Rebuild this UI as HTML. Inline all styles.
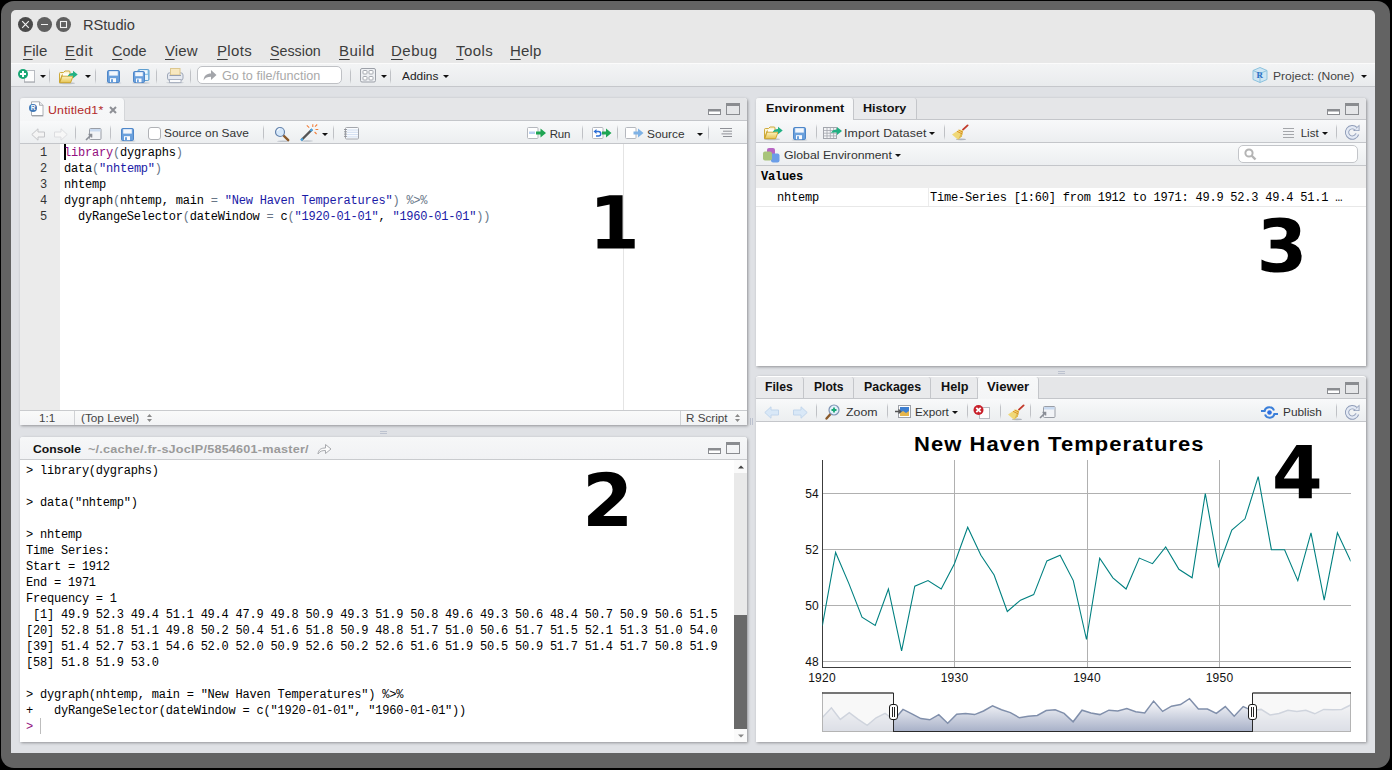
<!DOCTYPE html>
<html>
<head>
<meta charset="utf-8">
<title>RStudio</title>
<style>
*{box-sizing:border-box;margin:0;padding:0}
html,body{width:1392px;height:770px;overflow:hidden;background:#000;font-family:"Liberation Sans",sans-serif;}
body{position:relative}
.a{position:absolute}
#frame{position:absolute;left:1px;top:1px;width:1389px;height:767px;background:#636363;border-radius:13px;}
#win{position:absolute;left:11px;top:10px;width:1364px;height:743px;background:#e8e8e8;border-radius:5px 5px 0 0;overflow:hidden}
#pg{position:absolute;left:-11px;top:-10px;width:1392px;height:770px}
#titletext{position:absolute;left:83px;top:16px;font-size:14px;color:#3a3a3a;line-height:18px}
.wbtn{position:absolute;top:17px;width:15px;height:15px;border-radius:50%;background:#5c5c5c}
.menu{position:absolute;top:42px;font-size:14px;color:#3c3c3c;line-height:18px}
.menu u{text-decoration:none;border-bottom:1px solid #3c3c3c}
#toolbar{position:absolute;left:11px;top:63px;width:1364px;height:24px;background:linear-gradient(#f3f4f5,#e9ebed);border-top:1px solid #fbfbfb;border-bottom:1px solid #c5c7cb}
#main{position:absolute;left:11px;top:87px;width:1364px;height:666px;background:#dfe1e5}
.pane{position:absolute;background:#fff;box-shadow:1px 1px 3px rgba(0,0,0,.35);border-radius:3px 3px 0 0}
.tabbar{position:absolute;background:#e5e6e8;border-bottom:1px solid #c4c6ca;border-radius:3px 3px 0 0}
.ptool{position:absolute;background:linear-gradient(#f8f9fa,#eceef0);border-bottom:1px solid #c4c6ca}
.mono{position:absolute;font-family:"Liberation Mono",monospace;font-size:12px;letter-spacing:-0.216px;white-space:pre;line-height:16px;color:#000}
.ui{position:absolute;font-size:12px;color:#2a2a2a;line-height:14px;white-space:nowrap}
.b{font-weight:bold}
.p{color:#687687}.s{color:#1a1aa6}.o{color:#687687}
.vtab{top:377px;height:21px;background:#e9eaec;border-right:1px solid #c4c6ca;border-radius:3px 3px 0 0}
.sep{position:absolute;width:1px;height:16px;margin-top:-1px;background:linear-gradient(rgba(190,192,196,0),#bfc1c5 25%,#bfc1c5 75%,rgba(190,192,196,0))}
.dd{position:absolute;width:0;height:0;border-left:3px solid transparent;border-right:3px solid transparent;border-top:3px solid #111}
svg{position:absolute;overflow:visible}
</style>
</head>
<body>
<div id="frame"></div>
<div id="win"><div id="pg">
  <div class="wbtn" style="left:18px;background:#4a4a4a"></div>
  <div class="wbtn" style="left:37px;background:#5f5f5f"></div>
  <div class="wbtn" style="left:56px;background:#5f5f5f"></div>
  <svg style="left:18px;top:17px" width="53" height="15" viewBox="0 0 53 15">
    <path d="M4.200 4.200l6.600 6.600M10.800 4.200l-6.600 6.600" stroke="#f0f0f0" stroke-width="1.200"/>
    <path d="M23 7.500h7" stroke="#f0f0f0" stroke-width="1.200"/>
    <rect x="42.500" y="4.500" width="6" height="6" fill="none" stroke="#f0f0f0" stroke-width="1.100"/>
  </svg>
  <div id="titletext" style="left:83.0px;top:16px;letter-spacing:-0.00px;transform:scaleX(1.044);transform-origin:0 0">RStudio</div>
  <span class="menu" style="left:22.6px;;letter-spacing:0.06px;transform:scaleX(1.070);transform-origin:0 0"><u>F</u>ile</span>
  <span class="menu" style="left:65.2px;;letter-spacing:0.54px;transform:scaleX(1.070);transform-origin:0 0"><u>E</u>dit</span>
  <span class="menu" style="left:111.6px;;letter-spacing:0.00px;transform:scaleX(1.027);transform-origin:0 0"><u>C</u>ode</span>
  <span class="menu" style="left:165.1px;;letter-spacing:0.08px;transform:scaleX(1.070);transform-origin:0 0"><u>V</u>iew</span>
  <span class="menu" style="left:216.5px;;letter-spacing:0.34px;transform:scaleX(1.070);transform-origin:0 0"><u>P</u>lots</span>
  <span class="menu" style="left:270.3px;;letter-spacing:0.00px;transform:scaleX(1.020);transform-origin:0 0"><u>S</u>ession</span>
  <span class="menu" style="left:338.6px;;letter-spacing:0.47px;transform:scaleX(1.070);transform-origin:0 0"><u>B</u>uild</span>
  <span class="menu" style="left:391.4px;;letter-spacing:0.46px;transform:scaleX(1.070);transform-origin:0 0"><u>D</u>ebug</span>
  <span class="menu" style="left:456.1px;;letter-spacing:0.40px;transform:scaleX(1.070);transform-origin:0 0"><u>T</u>ools</span>
  <span class="menu" style="left:510.4px;;letter-spacing:0.13px;transform:scaleX(1.070);transform-origin:0 0"><u>H</u>elp</span>
  <div id="toolbar"></div>
  <!-- new file -->
  <svg style="left:17px;top:68px" width="20" height="16" viewBox="0 0 20 16">
    <rect x="7.5" y="2.5" width="10" height="11.5" fill="#fdfdfd" stroke="#b9bcc2"/>
    <rect x="7" y="13.5" width="11" height="1.2" fill="#9a9da3" opacity=".6"/>
    <circle cx="6" cy="6" r="5" fill="#18a774"/>
    <path d="M3 6h6M6 3v6" stroke="#fff" stroke-width="2"/>
  </svg>
  <div class="dd" style="left:40px;top:75px"></div>
  <div class="sep" style="left:49px;top:69px"></div>
  <!-- open -->
  <svg style="left:58px;top:69px" width="20" height="16" viewBox="0 0 20 16">
    <defs><linearGradient id="fg1" x1="0" y1="0" x2="0" y2="1"><stop offset="0" stop-color="#fdf3bf"/><stop offset="1" stop-color="#e6c352"/></linearGradient></defs>
    <ellipse cx="9" cy="14.300" rx="8" ry="1" fill="#7d8796" opacity=".4"/>
    <path d="M1.500 13.500V4.500q0-1 1-1h3l1.500-1.500h4q1 0 1 1v3h-8z" fill="#fbf3d3" stroke="#c9a227" stroke-width=".9"/>
    <path d="M5 4.500h6v3H5z" fill="#fff"/>
    <path d="M1.800 13.700l2.200-6.500h11l-2.400 6.500z" fill="url(#fg1)" stroke="#c9a227" stroke-width=".9"/>
    <path d="M9.500 7.500c1-2.500 3-3.500 5.500-3.500V1.800l4.700 3.700-4.700 3.700V6.800c-2.500 0-4 0-5.500.7z" fill="#21b184"/>
  </svg>
  <div class="dd" style="left:85px;top:75px"></div>
  <div class="sep" style="left:95px;top:69px"></div>
  <!-- save -->
  <svg style="left:107px;top:70px" width="14" height="13" viewBox="0 0 14 13">
    <ellipse cx="6.500" cy="13" rx="8" ry=".8" fill="#7d8796" opacity=".4"/>
    <rect x=".5" y=".5" width="12" height="12" rx="1.200" fill="#6aa0dc" stroke="#4e86c8"/>
    <rect x="2.200" y="1.200" width="8.600" height="4.400" fill="#f3f7fc"/>
    <rect x="3" y="8.200" width="6" height="4" fill="#fbfcfe"/>
    <rect x="4" y="9.200" width="2" height="3" fill="#6aa0dc"/>
  </svg>
  <!-- save all -->
  <svg style="left:133px;top:69px" width="17" height="15" viewBox="0 0 17 15">
    <ellipse cx="8" cy="14" rx="9" ry=".8" fill="#7d8796" opacity=".4"/>
    <rect x="5" y=".5" width="11" height="11" rx="1.200" fill="#8fc7ea" stroke="#5f9fd0"/>
    <rect x="7" y="1.200" width="7.500" height="3.500" fill="#f3f9fd"/>
    <rect x="12" y="6" width="3" height="5" fill="#e6f3fb"/>
    <rect x=".5" y="2.500" width="11" height="11" rx="1.200" fill="#6aa0dc" stroke="#4e86c8"/>
    <rect x="2.200" y="3.200" width="7.600" height="4" fill="#f3f7fc"/>
    <rect x="3" y="9.500" width="5.500" height="3.800" fill="#fbfcfe"/>
    <rect x="4" y="10.400" width="1.800" height="2.900" fill="#6aa0dc"/>
  </svg>
  <div class="sep" style="left:156px;top:69px"></div>
  <!-- print -->
  <svg style="left:166px;top:68px" width="18" height="16" viewBox="0 0 18 16">
    <ellipse cx="9" cy="14.800" rx="9" ry=".8" fill="#7d8796" opacity=".35"/>
    <rect x="1.500" y="4.800" width="15.500" height="7.500" rx="2.200" fill="#e6eaf1" stroke="#9ea7b8"/>
    <rect x="4.500" y=".5" width="9.500" height="6.500" fill="#f7e8c0" stroke="#dcc78f"/>
    <path d="M3.500 7.500h11.500" stroke="#8f99ad" stroke-width=".9"/>
    <rect x="3.500" y="11.500" width="11.500" height="3" fill="#fafbfc" stroke="#a6aebd" stroke-width=".9"/>
  </svg>
  <div class="sep" style="left:190px;top:69px"></div>
  <!-- goto box -->
  <div class="a" style="left:197px;top:66px;width:145px;height:18px;border:1px solid #bfc1c5;border-radius:5px;background:#fff"></div>
  <svg style="left:203px;top:69px" width="14" height="12" viewBox="0 0 14 12">
    <path d="M.5 11.500C1 6.500 3.500 4.500 8 4.500V1l5.500 5L8 11V7.800C4.500 7.800 2.500 8.500.5 11.500z" fill="#a3a5aa"/>
  </svg>
  <div class="ui" style="left:222.2px;top:69px;color:#a9a9a9;font-size:12.5px;width:98px;overflow:hidden;letter-spacing:0.00px;transform:scaleX(1.010);transform-origin:0 0">Go to file/function</div>
  <div class="sep" style="left:350px;top:69px"></div>
  <!-- grid -->
  <svg style="left:360px;top:68px" width="16" height="15" viewBox="0 0 16 15">
    <rect x=".5" y=".5" width="15" height="13.500" rx="1.500" fill="#eef0f3" stroke="#9ca0a8"/>
    <rect x="3" y="2.500" width="4" height="3.500" rx=".8" fill="#fff" stroke="#9ca0a8" stroke-width=".9"/>
    <rect x="9" y="2.500" width="4" height="3.500" rx=".8" fill="#fff" stroke="#9ca0a8" stroke-width=".9"/>
    <rect x="3" y="8.500" width="4" height="3.500" rx=".8" fill="#fff" stroke="#9ca0a8" stroke-width=".9"/>
    <rect x="9" y="8.500" width="4" height="3.500" rx=".8" fill="#fff" stroke="#9ca0a8" stroke-width=".9"/>
  </svg>
  <div class="dd" style="left:381px;top:75px"></div>
  <div class="sep" style="left:390px;top:69px"></div>
  <div class="ui" style="left:402.3px;top:69px;font-size:11.5px;color:#222;letter-spacing:0.00px;transform:scaleX(1.036);transform-origin:0 0">Addins</div>
  <div class="dd" style="left:443px;top:75px"></div>
  <!-- project -->
  <svg style="left:1252px;top:67px" width="16" height="16" viewBox="0 0 16 16">
    <path d="M8 .5l7 3v9l-7 3-7-3v-9z" fill="#cfe6f3" stroke="#8dc3de"/>
    <path d="M1 3.500l7 3 7-3M8 6.500v9" stroke="#8dc3de" fill="none"/>
    <text x="4.500" y="10.500" font-family="Liberation Serif" font-weight="bold" font-size="9" fill="#2d6fc4">R</text>
  </svg>
  <div class="ui" style="left:1272.5px;top:69px;font-size:11.5px;color:#444;letter-spacing:0.00px;transform:scaleX(1.052);transform-origin:0 0">Project: (None)</div>
  <div class="dd" style="left:1361px;top:75px"></div>
  <div id="main"></div>
  <svg style="left:380px;top:431px" width="7" height="3" viewBox="0 0 7 3"><path d="M0 .5h7M0 2.500h7" stroke="#bcc2cf"/></svg>
  <svg style="left:1058px;top:371px" width="7" height="3" viewBox="0 0 7 3"><path d="M0 .5h7M0 2.500h7" stroke="#bcc2cf"/></svg>
  <svg style="left:750px;top:418px" width="3" height="7" viewBox="0 0 3 7"><path d="M.5 0v7M2.500 0v7" stroke="#bcc2cf"/></svg>
  <!-- SOURCE PANE -->
  <div class="pane" id="src" style="left:20px;top:98px;width:727px;height:327px"></div>
  <div class="tabbar" style="left:20px;top:98px;width:727px;height:23px"></div>
  <!-- active tab -->
  <div class="a" style="left:20px;top:98px;width:105px;height:23px;background:linear-gradient(#f7f8f9,#f5f6f7);border-radius:4px 4px 0 0;border-right:1px solid #d4d6d9"></div>
  <svg style="left:29px;top:101px" width="16" height="16" viewBox="0 0 16 16">
    <path d="M2.500 .8h8l3.500 3.500v10.200h-11.500z" fill="#fff" stroke="#a3a6ac" stroke-width=".9"/>
    <path d="M10.500 .8v3.500h3.500" fill="#e8e9ec" stroke="#a3a6ac" stroke-width=".9"/>
    <path d="M3 15h11.300" stroke="#85888e" stroke-width=".9" opacity=".7"/>
    <circle cx="4" cy="7" r="4" fill="#4179b8"/>
    <text x="1.700" y="9.400" font-size="6.500" font-weight="bold" fill="#fff" font-family="Liberation Sans">R</text>
  </svg>
  <div class="ui" style="left:48.3px;top:103px;font-size:11.5px;color:#b32a2a;letter-spacing:0.19px;transform:scaleX(1.070);transform-origin:0 0">Untitled1*</div>
  <svg style="left:109px;top:106px" width="8" height="8" viewBox="0 0 8 8"><path d="M1 1l6 6M7 1l-6 6" stroke="#8e9096" stroke-width="2"/></svg>
  <!-- min/max -->
  <svg style="left:708px;top:103px" width="33" height="13" viewBox="0 0 33 13">
    <rect x=".5" y="6.500" width="12" height="5" fill="#fff" stroke="#8a8c90"/><rect x="0" y="6" width="13" height="2.500" fill="#8a8c90"/>
    <rect x="18.500" y=".5" width="13" height="11" fill="none" stroke="#8a8c90"/><rect x="18" y="0" width="14" height="3" fill="#8a8c90"/>
  </svg>
  <div class="ptool" style="left:20px;top:121px;width:727px;height:23px"></div>
  <!-- back/forward -->
  <svg style="left:31px;top:128px" width="37" height="13" viewBox="0 0 37 13">
    <path d="M.8 6.500L7 .8V4h6.500v5H7v3.200z" fill="#f4f4f4" stroke="#c3c4c7"/>
    <path d="M36.200 6.500L30 .8V4h-6.500v5H30v3.200z" fill="#f7f7f7" stroke="#dcdde0"/>
  </svg>
  <div class="sep" style="left:75px;top:126px"></div>
  <!-- show in new window -->
  <svg style="left:85px;top:128px" width="17" height="13" viewBox="0 0 17 13">
    <rect x="4.500" y=".5" width="11.500" height="11" rx="1" fill="#f2f4f7" stroke="#9a9ea6"/>
    <rect x="5" y="1" width="10.500" height="2.500" fill="#c9daf0"/>
    <path d="M1 12l5-5M3.500 6.500h3v3" stroke="#8a8e96" stroke-width="1.600" fill="none"/>
  </svg>
  <div class="sep" style="left:110px;top:126px"></div>
  <svg style="left:121px;top:128px" width="14" height="13" viewBox="0 0 14 13">
    <ellipse cx="6.500" cy="13" rx="8" ry=".8" fill="#7d8796" opacity=".4"/>
    <rect x=".5" y=".5" width="12" height="12" rx="1.200" fill="#6aa0dc" stroke="#4e86c8"/>
    <rect x="2.200" y="1.200" width="8.600" height="4.400" fill="#f3f7fc"/>
    <rect x="3" y="8.200" width="6" height="4" fill="#fbfcfe"/>
    <rect x="4" y="9.200" width="2" height="3" fill="#6aa0dc"/>
  </svg>
  <div class="a" style="left:148px;top:127px;width:13px;height:13px;border:1px solid #b0b2b6;border-radius:3px;background:#fff"></div>
  <div class="ui" style="left:164.3px;top:126px;font-size:11.5px;color:#333;letter-spacing:0.00px;transform:scaleX(1.036);transform-origin:0 0">Source on Save</div>
  <div class="sep" style="left:263px;top:126px"></div>
  <!-- magnifier -->
  <svg style="left:274px;top:126px" width="17" height="16" viewBox="0 0 17 16">
    <ellipse cx="9" cy="15.300" rx="6" ry=".8" fill="#7d8796" opacity=".4"/>
    <path d="M9 9l5.200 5.200" stroke="#8a5a2b" stroke-width="2.400" stroke-linecap="round"/>
    <circle cx="6" cy="6" r="4.500" fill="#d6e8fa" stroke="#6684ad" stroke-width="1.200"/>
    <path d="M3.500 5a2.800 2.800 0 0 1 2.500-2.300" stroke="#fff" stroke-width="1" fill="none"/>
  </svg>
  <!-- wand -->
  <svg style="left:300px;top:124px" width="20" height="18" viewBox="0 0 20 18">
    <path d="M1.500 16L12 5.500" stroke="#555" stroke-width="2.400"/>
    <path d="M1 16.500l1.800-1.800M10.500 7l1.800-1.800" stroke="#4aa3df" stroke-width="2.400"/>
    <path d="M12.800 .3v2.700M15 2.700l2.200-2.200M15.500 5.500h2.800M14.600 8l2 2M6.800 1.300l2.400 2.400" stroke="#f2803c" stroke-width="1.100"/>
    <ellipse cx="7" cy="17" rx="6" ry=".8" fill="#7d8796" opacity=".4"/>
  </svg>
  <div class="dd" style="left:322px;top:133px"></div>
  <div class="sep" style="left:333px;top:126px"></div>
  <!-- notebook -->
  <svg style="left:344px;top:127px" width="16" height="13" viewBox="0 0 16 13">
    <rect x="1.500" y=".5" width="13" height="11.500" rx="1" fill="#fbfcfe" stroke="#a4a7ad"/>
    <path d="M3 3h11M3 5.300h11M3 7.600h11M3 9.900h11" stroke="#c5d6ee" stroke-width=".8"/>
    <path d="M0 2.500h3M0 4.800h3M0 7.100h3M0 9.400h3" stroke="#8c8f95" stroke-width=".9"/>
  </svg>
  <!-- run -->
  <svg style="left:527px;top:127px" width="20" height="13" viewBox="0 0 20 13">
    <rect x=".5" y=".5" width="10.500" height="11" rx="1" fill="#fff" stroke="#b5b8be"/>
    <rect x="2" y="4.500" width="6" height="2.500" fill="#b9d0f0"/>
    <path d="M9 4.500h4.500V1.500l5.500 4.500-5.500 4.500v-3H9z" fill="#1fa553"/>
  </svg>
  <div class="ui" style="left:549.8px;top:127px;font-size:11.5px;color:#333;letter-spacing:-0.25px">Run</div>
  <div class="sep" style="left:582px;top:126px"></div>
  <!-- rerun -->
  <svg style="left:592px;top:127px" width="20" height="13" viewBox="0 0 20 13">
    <rect x=".5" y=".5" width="10.500" height="11" rx="1" fill="#fff" stroke="#b5b8be"/>
    <path d="M3 4.500h3.500a2 2 0 0 1 0 4.500H4" stroke="#2c6fd6" stroke-width="1.500" fill="none"/><path d="M1.500 4.500L4.500 2v5z" fill="#2c6fd6"/>
    <path d="M10 4.500h4V1.500l5.500 4.500-5.500 4.500v-3h-4z" fill="#1fa553"/>
  </svg>
  <div class="sep" style="left:617px;top:126px"></div>
  <!-- source -->
  <svg style="left:625px;top:127px" width="20" height="13" viewBox="0 0 20 13">
    <rect x=".5" y=".5" width="10.500" height="11" rx="1" fill="#fff" stroke="#b5b8be"/>
    <path d="M8.500 4.500h4.500V1.500l5.500 4.500-5.500 4.500v-3H8.500z" fill="#7fb2e5"/>
  </svg>
  <div class="ui" style="left:647.3px;top:127px;font-size:11.5px;color:#333;letter-spacing:0.00px;transform:scaleX(1.032);transform-origin:0 0">Source</div>
  <div class="dd" style="left:697px;top:133px"></div>
  <div class="sep" style="left:708px;top:126px"></div>
  <svg style="left:720px;top:128px" width="13" height="9" viewBox="0 0 13 9"><path d="M0 .5h12M3 3.200h9M1.500 5.900h10.500M3 8.500h9" stroke="#8e9096" stroke-width="1"/></svg>
  <!-- editor -->
  <div class="a" style="left:20px;top:144px;width:40px;height:266px;background:#ebebeb"></div>
  <div class="a" style="left:623px;top:144px;width:1px;height:266px;background:#e4e4e4"></div>
  <div class="mono" style="left:20px;top:145px;width:27px;text-align:right;color:#333">1
2
3
4
5</div>
  <div class="a" style="left:64px;top:144px;width:2px;height:16px;background:#000"></div>
  <div class="mono" id="code" style="left:64px;top:145px"><span style="color:#930f80">library</span><span class="p">(</span>dygraphs<span class="p">)</span>
data<span class="p">(</span><span class="s">"nhtemp"</span><span class="p">)</span>
nhtemp
dygraph<span class="p">(</span>nhtemp, main <span class="o">=</span> <span class="s">"New Haven Temperatures"</span><span class="p">)</span> <span class="o">%&gt;%</span>
  dyRangeSelector<span class="p">(</span>dateWindow <span class="o">=</span> c<span class="p">(</span><span class="s">"1920-01-01"</span>, <span class="s">"1960-01-01"</span><span class="p">))</span></div>
  <!-- status bar -->
  <div class="a" style="left:20px;top:410px;width:727px;height:15px;background:linear-gradient(#f9fafa,#f2f3f5);border-top:1px solid #c9cbce"></div>
  <div class="ui" style="left:39.4px;top:411px;font-size:11.500px;color:#444;letter-spacing:-0.00px;transform:scaleX(1.013);transform-origin:0 0">1:1</div>
  <div class="a" style="left:74px;top:411px;width:1px;height:14px;background:#d0d2d5"></div>
  <div class="ui" style="left:81.4px;top:411px;font-size:11.500px;color:#444;letter-spacing:0.00px;transform:scaleX(1.022);transform-origin:0 0">(Top Level)</div>
  <svg style="left:147px;top:414px" width="5" height="8" viewBox="0 0 5 8"><path d="M0 3L2.500 0 5 3zM0 5l2.500 3L5 5z" fill="#8a8a8a"/></svg>
  <div class="a" style="left:680px;top:411px;width:1px;height:14px;background:#d0d2d5"></div>
  <div class="ui" style="left:686.4px;top:411px;font-size:11.500px;color:#444;letter-spacing:0.00px;transform:scaleX(1.014);transform-origin:0 0">R Script</div>
  <svg style="left:735px;top:414px" width="5" height="8" viewBox="0 0 5 8"><path d="M0 3L2.500 0 5 3zM0 5l2.500 3L5 5z" fill="#8a8a8a"/></svg>
  <!-- CONSOLE PANE -->
  <div class="pane" id="con" style="left:20px;top:437px;width:727px;height:305px"></div>
  <div class="a" style="left:20px;top:437px;width:727px;height:23px;background:linear-gradient(#f6f7f8,#f1f2f4);border-bottom:1px solid #c9cbce;border-radius:3px 3px 0 0"></div>
  <div class="ui b" style="left:32.6px;top:442px;font-size:11.5px;color:#111;letter-spacing:0.00px;transform:scaleX(1.058);transform-origin:0 0" id="contitle">Console</div>
  <div class="ui b" style="left:87.8px;top:442px;font-size:11.5px;color:#9a9a9a;letter-spacing:0.19px;transform:scaleX(1.100);transform-origin:0 0" id="conpath">~/.cache/.fr-sJocIP/5854601-master/</div>
  <svg style="left:317px;top:443px" width="15" height="12" viewBox="0 0 15 12"><path d="M1 11C1.500 6.500 4 5 8.500 5V1.500l5.500 4.500-5.500 4.500V7.500C5 7.500 3 8 1 11z" fill="#fbfbfb" stroke="#a8aaae" stroke-width="1"/></svg>
  <svg style="left:708px;top:442px" width="33" height="13" viewBox="0 0 33 13">
    <rect x=".5" y="6.500" width="12" height="5" fill="#fff" stroke="#8a8c90"/><rect x="0" y="6" width="13" height="2.500" fill="#8a8c90"/>
    <rect x="18.500" y=".5" width="13" height="11" fill="none" stroke="#8a8c90"/><rect x="18" y="0" width="14" height="3" fill="#8a8c90"/>
  </svg>
  <div class="mono" id="context" style="left:26px;top:463px">&gt; library(dygraphs)

&gt; data("nhtemp")

&gt; nhtemp
Time Series:
Start = 1912 
End = 1971 
Frequency = 1 
 [1] 49.9 52.3 49.4 51.1 49.4 47.9 49.8 50.9 49.3 51.9 50.8 49.6 49.3 50.6 48.4 50.7 50.9 50.6 51.5
[20] 52.8 51.8 51.1 49.8 50.2 50.4 51.6 51.8 50.9 48.8 51.7 51.0 50.6 51.7 51.5 52.1 51.3 51.0 54.0
[39] 51.4 52.7 53.1 54.6 52.0 52.0 50.9 52.6 50.2 52.6 51.6 51.9 50.5 50.9 51.7 51.4 51.7 50.8 51.9
[58] 51.8 51.9 53.0

&gt; dygraph(nhtemp, main = "New Haven Temperatures") %&gt;%
+   dyRangeSelector(dateWindow = c("1920-01-01", "1960-01-01"))
<span style="color:#930f80">&gt;</span> </div>
  <div class="a" style="left:40px;top:718px;width:1px;height:16px;background:#bdbdbd"></div>
  <!-- scrollbar -->
  <div class="a" style="left:734px;top:460px;width:13px;height:282px;background:#e9e9e9"></div>
  <div class="a" style="left:734px;top:460px;width:13px;height:13px;background:#fafafa"></div>
  <div class="a" style="left:734px;top:729px;width:13px;height:13px;background:#fafafa"></div>
  <div class="a" style="left:734px;top:615px;width:13px;height:114px;background:#696969"></div>
  <svg style="left:738px;top:465px" width="6" height="4" viewBox="0 0 6 4"><path d="M0 3.500L3 .5l3 3z" fill="#444"/></svg>
  <svg style="left:738px;top:734px" width="6" height="4" viewBox="0 0 6 4"><path d="M0 .5L3 3.500l3-3z" fill="#888"/></svg>
  <!-- ENV PANE -->
  <div class="pane" id="env" style="left:756px;top:98px;width:610px;height:268px"></div>
  <div class="tabbar" style="left:756px;top:98px;width:610px;height:22px"></div>
  <div class="a" style="left:756px;top:98px;width:98px;height:22px;background:linear-gradient(#f7f8f9,#f4f5f6);border-radius:3px 3px 0 0;border-right:1px solid #c4c6ca"></div>
  <div class="a" style="left:854px;top:98px;width:63px;height:21px;background:#e9eaec;border-right:1px solid #c4c6ca;border-radius:0 3px 0 0"></div>
  <div class="ui b" style="left:765.5px;top:101px;font-size:11.5px;color:#111;letter-spacing:0.09px;transform:scaleX(1.100);transform-origin:0 0" id="t_env">Environment</div>
  <div class="ui b" style="left:863.4px;top:101px;font-size:11.5px;color:#111;letter-spacing:0.00px;transform:scaleX(1.094);transform-origin:0 0" id="t_hist">History</div>
  <svg style="left:1327px;top:103px" width="33" height="13" viewBox="0 0 33 13">
    <rect x=".5" y="6.500" width="12" height="5" fill="#fff" stroke="#8a8c90"/><rect x="0" y="6" width="13" height="2.500" fill="#8a8c90"/>
    <rect x="18.500" y=".5" width="13" height="11" fill="none" stroke="#8a8c90"/><rect x="18" y="0" width="14" height="3" fill="#8a8c90"/>
  </svg>
  <div class="ptool" style="left:756px;top:120px;width:610px;height:23px"></div>
  <svg style="left:763px;top:125px" width="20" height="16" viewBox="0 0 20 16">
    <defs><linearGradient id="fg2" x1="0" y1="0" x2="0" y2="1"><stop offset="0" stop-color="#fdf3bf"/><stop offset="1" stop-color="#e6c352"/></linearGradient></defs>
    <ellipse cx="9" cy="14.300" rx="8" ry="1" fill="#7d8796" opacity=".4"/>
    <path d="M1.500 13.500V4.500q0-1 1-1h3l1.500-1.500h4q1 0 1 1v3h-8z" fill="#fbf3d3" stroke="#c9a227" stroke-width=".9"/>
    <path d="M5 4.500h6v3H5z" fill="#fff"/>
    <path d="M1.800 13.700l2.200-6.500h11l-2.400 6.500z" fill="url(#fg2)" stroke="#c9a227" stroke-width=".9"/>
    <path d="M9.500 7.500c1-2.500 3-3.500 5.500-3.500V1.800l4.700 3.700-4.700 3.700V6.800c-2.500 0-4 0-5.500.7z" fill="#21b184"/>
  </svg>
  <svg style="left:793px;top:127px" width="14" height="13" viewBox="0 0 14 13">
    <ellipse cx="6.500" cy="13" rx="8" ry=".8" fill="#7d8796" opacity=".4"/>
    <rect x=".5" y=".5" width="12" height="12" rx="1.200" fill="#6aa0dc" stroke="#4e86c8"/>
    <rect x="2.200" y="1.200" width="8.600" height="4.400" fill="#f3f7fc"/>
    <rect x="3" y="8.200" width="6" height="4" fill="#fbfcfe"/>
    <rect x="4" y="9.200" width="2" height="3" fill="#6aa0dc"/>
  </svg>
  <div class="sep" style="left:816px;top:125px"></div>
  <svg style="left:823px;top:126px" width="20" height="14" viewBox="0 0 20 14">
    <rect x=".5" y="1.500" width="13" height="11" fill="#f4f5f7" stroke="#a3a6ad"/>
    <path d="M.5 4.500h13M.5 7.200h13M.5 9.900h13M4 1.500v11M7.300 1.500v11M10.600 1.500v11" stroke="#a3a6ad" stroke-width=".8"/>
    <path d="M8 7c1-2.500 3-3.500 6-3.500V1l5 4-5 4V6.500c-3 0-4.500 0-6 .5z" fill="#22b082"/>
  </svg>
  <div class="ui" style="left:844.3px;top:126px;font-size:11.5px;color:#333;letter-spacing:0.12px;transform:scaleX(1.070);transform-origin:0 0" id="t_imp">Import Dataset</div>
  <div class="dd" style="left:929px;top:132px"></div>
  <div class="sep" style="left:944px;top:125px"></div>
  <svg style="left:952px;top:124px" width="17" height="16" viewBox="0 0 17 16" class="broom">
    <ellipse cx="9" cy="15.300" rx="5" ry=".9" fill="#7d8796" opacity=".55"/>
    <path d="M11 5.600L15.600 1.400" stroke="#c23a2a" stroke-width="1.900" stroke-linecap="round"/>
    <path d="M7.400 5.400L11 6.300 9.900 12.200 6 15.800 0 10.500z" fill="#f0d878"/>
    <path d="M6 15.800L9.900 12.200 11 6.300 9 9z" fill="#dcb951"/>
    <path d="M5 7.300L10.400 10M6.600 6L10.800 8.200" stroke="#d98a1e" stroke-width=".9"/>
  </svg>
  <svg style="left:1283px;top:128px" width="11" height="10" viewBox="0 0 11 10"><path d="M0 .5h11M0 3.500h11M0 6.500h11M0 9.500h11" stroke="#a4a6aa" stroke-width="1"/></svg>
  <div class="ui" style="left:1300.7px;top:126px;font-size:11.5px;color:#333;letter-spacing:-0.00px">List</div>
  <div class="dd" style="left:1322px;top:132px"></div>
  <div class="sep" style="left:1336px;top:125px"></div>
  <svg style="left:1344px;top:124px" width="16" height="15" viewBox="0 0 16 15" class="refresh">
    <path d="M12 4.800A5.200 5.200 0 1 0 13.200 10" fill="none" stroke="#8f9cb8" stroke-width="4.200"/>
    <path d="M9 7h6.500V.5z" fill="#8f9cb8"/>
    <path d="M12 4.800A5.200 5.200 0 1 0 13.200 10" fill="none" stroke="#e3e9f4" stroke-width="2.400"/>
    <path d="M10.800 6.200h3.900V2.300z" fill="#e3e9f4"/>
  </svg>
  <div class="ptool" style="left:756px;top:143px;width:610px;height:23px"></div>
  <svg style="left:763px;top:148px" width="17" height="15" viewBox="0 0 17 15">
    <rect x="4" y="0" width="8" height="8" rx="2" fill="#b866c4"/>
    <rect x="8" y="5.500" width="8.500" height="9" rx="2" fill="#6b9ee8"/>
    <rect x="0" y="3.500" width="9" height="9" rx="2" fill="#a8c47a"/>
  </svg>
  <div class="ui" style="left:784.3px;top:148px;font-size:11.5px;color:#333;letter-spacing:-0.00px;transform:scaleX(1.068);transform-origin:0 0" id="t_glob">Global Environment</div>
  <div class="dd" style="left:895px;top:154px"></div>
  <div class="a" style="left:1238px;top:145px;width:120px;height:18px;border:1px solid #c3c5c9;border-radius:5px;background:#fff"></div>
  <svg style="left:1244px;top:148px" width="13" height="12" viewBox="0 0 13 12"><circle cx="5" cy="5" r="3.600" fill="none" stroke="#b4b4b4" stroke-width="2"/><path d="M7.500 7.500l4 4" stroke="#b4b4b4" stroke-width="2.400"/></svg>
  <div class="a" style="left:756px;top:166px;width:610px;height:22px;background:#eeeeee"></div>
  <div class="mono b" style="left:761px;top:169px;font-weight:bold">Values</div>
  <div class="a" style="left:756px;top:206px;width:610px;height:1px;background:#e8e8e8"></div>
  <div class="a" style="left:928px;top:188px;width:1px;height:18px;background:#ececec"></div>
  <div class="mono" style="left:777px;top:190px">nhtemp</div>
  <div class="mono" style="left:930px;top:190px">Time-Series [1:60] from 1912 to 1971: 49.9 52.3 49.4 51.1 …</div>
  <!-- VIEWER PANE -->
  <div class="pane" id="vw" style="left:756px;top:376px;width:610px;height:366px"></div>
<!--VWS-->
  <div class="tabbar" style="left:756px;top:377px;width:610px;height:22px"></div>
  <div class="a vtab" style="left:756px;width:48px"></div>
  <div class="a vtab" style="left:804px;width:50px"></div>
  <div class="a vtab" style="left:854px;width:77px"></div>
  <div class="a vtab" style="left:931px;width:47px"></div>
  <div class="a" style="left:978px;top:377px;width:61px;height:22px;background:linear-gradient(#f7f8f9,#f4f5f6);border-radius:3px 3px 0 0;border-right:1px solid #c4c6ca"></div>
  <div class="ui b" style="left:765.3px;top:380px;font-size:12px;color:#111;letter-spacing:0.00px;transform:scaleX(1.015);transform-origin:0 0" id="t_files">Files</div>
  <div class="ui b" style="left:813.6px;top:380px;font-size:12px;color:#111;letter-spacing:-0.00px;transform:scaleX(1.008);transform-origin:0 0" id="t_plots">Plots</div>
  <div class="ui b" style="left:863.5px;top:380px;font-size:12px;color:#111;letter-spacing:0.00px;transform:scaleX(1.032);transform-origin:0 0" id="t_pack">Packages</div>
  <div class="ui b" style="left:940.5px;top:380px;font-size:12px;color:#111;letter-spacing:0.00px;transform:scaleX(1.056);transform-origin:0 0" id="t_help">Help</div>
  <div class="ui b" style="left:987.0px;top:380px;font-size:12px;color:#111;letter-spacing:0.00px;transform:scaleX(1.095);transform-origin:0 0" id="t_view">Viewer</div>
  <svg style="left:1327px;top:382px" width="33" height="13" viewBox="0 0 33 13">
    <rect x=".5" y="6.500" width="12" height="5" fill="#fff" stroke="#8a8c90"/><rect x="0" y="6" width="13" height="2.500" fill="#8a8c90"/>
    <rect x="18.500" y=".5" width="13" height="11" fill="none" stroke="#8a8c90"/><rect x="18" y="0" width="14" height="3" fill="#8a8c90"/>
  </svg>
  <div class="ptool" style="left:756px;top:399px;width:610px;height:23px"></div>
  <svg style="left:764px;top:406px" width="44" height="13" viewBox="0 0 44 13">
    <path d="M.8 6.500L7 .8V4h7.500v5H7v3.200z" fill="#d9e8f7" stroke="#c2d6ec"/>
    <path d="M43.200 6.500L37 .8V4h-7.500v5H37v3.200z" fill="#d9e8f7" stroke="#c2d6ec"/>
  </svg>
  <div class="sep" style="left:816px;top:404px"></div>
  <svg style="left:825px;top:404px" width="15" height="16" viewBox="0 0 15 16">
    <path d="M6 9.500L1.500 14.500" stroke="#8a5a2b" stroke-width="2.400" stroke-linecap="round"/>
    <circle cx="9" cy="6" r="5" fill="#e3f0fb" stroke="#7d93b3" stroke-width="1.200"/>
    <path d="M6.500 6h5M9 3.500v5" stroke="#18a774" stroke-width="1.800"/>
  </svg>
  <div class="ui" style="left:846.3px;top:405px;font-size:11.5px;color:#333;letter-spacing:0.05px;transform:scaleX(1.070);transform-origin:0 0" id="t_zoom">Zoom</div>
  <div class="sep" style="left:887px;top:404px"></div>
  <svg style="left:895px;top:405px" width="16" height="14" viewBox="0 0 16 14">
    <rect x="3.500" y=".5" width="12" height="12" fill="#fff" stroke="#9ea2a9"/>
    <rect x="5" y="2" width="9" height="9" fill="#3e7fd0"/>
    <path d="M5 8l3-2 3 2 3-2v5H5z" fill="#e6b64c"/>
    <path d="M0 6.500h5M3.500 4.500l2.200 2-2.200 2" stroke="#555" stroke-width="1.300" fill="none"/>
  </svg>
  <div class="ui" style="left:914.5px;top:405px;font-size:11.5px;color:#333;letter-spacing:0.00px;transform:scaleX(1.019);transform-origin:0 0" id="t_exp">Export</div>
  <div class="dd" style="left:952px;top:411px"></div>
  <div class="sep" style="left:967px;top:404px"></div>
  <svg style="left:973px;top:404px" width="18" height="16" viewBox="0 0 18 16">
    <rect x="6.500" y="3.500" width="10" height="11" fill="#fdfdfd" stroke="#b9bcc2"/>
    <circle cx="5.500" cy="6" r="5" fill="#c8202a"/>
    <path d="M3.300 3.800l4.400 4.400M7.700 3.800L3.300 8.200" stroke="#fff" stroke-width="1.800"/>
  </svg>
  <div class="sep" style="left:1000px;top:404px"></div>
  <svg style="left:1008px;top:404px" width="17" height="16" viewBox="0 0 17 16" class="broom">
    <ellipse cx="9" cy="15.300" rx="5" ry=".9" fill="#7d8796" opacity=".55"/>
    <path d="M11 5.600L15.600 1.400" stroke="#c23a2a" stroke-width="1.900" stroke-linecap="round"/>
    <path d="M7.400 5.400L11 6.300 9.900 12.200 6 15.800 0 10.500z" fill="#f0d878"/>
    <path d="M6 15.800L9.900 12.200 11 6.300 9 9z" fill="#dcb951"/>
    <path d="M5 7.300L10.400 10M6.600 6L10.800 8.200" stroke="#d98a1e" stroke-width=".9"/>
  </svg>
  <div class="sep" style="left:1030px;top:404px"></div>
  <svg style="left:1039px;top:406px" width="17" height="13" viewBox="0 0 17 13">
    <rect x="4.500" y=".5" width="11.500" height="11" rx="1" fill="#f2f4f7" stroke="#9a9ea6"/>
    <rect x="5" y="1" width="10.500" height="2.500" fill="#c9daf0"/>
    <path d="M1 12l5-5M3.500 6.500h3v3" stroke="#8a8e96" stroke-width="1.600" fill="none"/>
  </svg>
  <svg style="left:1261px;top:406px" width="17" height="13" viewBox="0 0 17 13">
    <path d="M3.500 5A5 5 0 0 1 13 4.500" fill="none" stroke="#3b7fd9" stroke-width="2"/>
    <path d="M13.500 8A5 5 0 0 1 4 8.500" fill="none" stroke="#3b7fd9" stroke-width="2"/>
    <path d="M0 5h4.500M12.500 8H17" stroke="#3b7fd9" stroke-width="2"/>
    <circle cx="8.500" cy="6.500" r="2.300" fill="#2d6fe0"/>
  </svg>
  <div class="ui" style="left:1282.6px;top:405px;font-size:11.5px;color:#333;letter-spacing:0.00px;transform:scaleX(1.029);transform-origin:0 0" id="t_pub">Publish</div>
  <div class="sep" style="left:1336px;top:404px"></div>
  <svg style="left:1344px;top:404px" width="16" height="15" viewBox="0 0 16 15" class="refresh">
    <path d="M12 4.800A5.200 5.200 0 1 0 13.200 10" fill="none" stroke="#8f9cb8" stroke-width="4.200"/>
    <path d="M9 7h6.500V.5z" fill="#8f9cb8"/>
    <path d="M12 4.800A5.200 5.200 0 1 0 13.200 10" fill="none" stroke="#e3e9f4" stroke-width="2.400"/>
    <path d="M10.800 6.200h3.900V2.300z" fill="#e3e9f4"/>
  </svg>
  <!-- chart -->
  <div class="a b" id="ctitle" style="left:913.6px;top:431px;font-size:20px;line-height:26px;color:#000;white-space:nowrap;letter-spacing:0.96px;transform:scaleX(1.100);transform-origin:0 0">New Haven Temperatures</div>
  <svg style="left:0;top:0" width="1392" height="770" viewBox="0 0 1392 770" id="chart">
    <defs><linearGradient id="rg" x1="0" y1="0" x2="0" y2="1"><stop offset="0" stop-color="#ffffff"/><stop offset="1" stop-color="#a6afc7"/></linearGradient>
    <clipPath id="cp"><rect x="822.4" y="455" width="528.2" height="215"/></clipPath></defs>
    <g stroke="#b0b0b0" stroke-width="1" shape-rendering="crispEdges">
      <path d="M822.4 493.500H1350.6M822.4 549.500H1350.6M822.4 605.500H1350.6M822.4 661.500H1350.6"/>
      <path d="M954.500 460V667M1087.500 460V667M1219.500 460V667"/>
    </g>
    <path d="M822.500 460V667.500H1350.6" fill="none" stroke="#3c3c3c" stroke-width="1" shape-rendering="crispEdges"/>
    <polyline points="809.2,580.6 822.4,625.5 835.6,552.5 848.8,583.4 862.0,617.1 875.2,625.5 888.4,589.0 901.6,650.8 914.8,586.2 928.0,580.6 941.2,589.0 954.4,563.7 967.7,527.2 980.9,555.3 994.1,575.0 1007.3,611.5 1020.5,600.2 1033.7,594.6 1046.9,560.9 1060.1,555.3 1073.3,580.6 1086.5,639.5 1099.7,558.1 1112.9,577.8 1126.1,589.0 1139.3,558.1 1152.5,563.7 1165.7,546.9 1178.9,569.3 1192.1,577.8 1205.3,493.5 1218.5,566.5 1231.8,530.0 1245.0,518.8 1258.2,476.7 1271.4,549.7 1284.6,549.7 1297.8,580.6 1311.0,532.8 1324.2,600.2 1337.4,532.8 1350.6,560.9 1363.8,552.5" fill="none" stroke="#008080" stroke-width="1.100" clip-path="url(#cp)"/>
    <g font-family="Liberation Sans" font-size="12" fill="#111" letter-spacing=".25">
      <text x="819" y="498" text-anchor="end">54</text><text x="819" y="554" text-anchor="end">52</text><text x="819" y="610" text-anchor="end">50</text><text x="819" y="666" text-anchor="end">48</text>
      <text x="822" y="682" text-anchor="middle">1920</text><text x="954.500" y="682" text-anchor="middle">1930</text><text x="1087" y="682" text-anchor="middle">1940</text><text x="1219.500" y="682" text-anchor="middle">1950</text>
    </g>
    <!-- range selector -->
    <polygon points="822.4,732 822.4,717.4 831.4,707.8 840.3,719.4 849.3,712.6 858.2,719.4 867.2,725.3 876.1,717.8 885.1,713.4 894.0,719.8 903.0,709.4 911.9,713.8 920.9,718.6 929.8,719.8 938.8,714.6 947.7,723.3 956.7,714.2 965.6,713.4 974.6,714.6 983.5,711.0 992.5,705.8 1001.5,709.8 1010.4,712.6 1019.4,717.8 1028.3,716.2 1037.3,715.4 1046.2,710.6 1055.2,709.8 1064.1,713.4 1073.1,721.8 1082.0,710.2 1091.0,713.0 1099.9,714.6 1108.9,710.2 1117.8,711.0 1126.8,708.6 1135.7,711.8 1144.7,713.0 1153.6,701.1 1162.6,711.4 1171.5,706.2 1180.5,704.6 1189.5,698.7 1198.4,709.0 1207.4,709.0 1216.3,713.4 1225.3,706.6 1234.2,716.2 1243.2,706.6 1252.1,710.6 1261.1,709.4 1270.0,715.0 1279.0,713.4 1287.9,710.2 1296.9,711.4 1305.8,710.2 1314.8,713.8 1323.7,709.4 1332.7,709.8 1341.6,709.4 1350.6,705.0 1350.6,732" fill="url(#rg)"/>
    <polyline points="822.4,717.4 831.4,707.8 840.3,719.4 849.3,712.6 858.2,719.4 867.2,725.3 876.1,717.8 885.1,713.4 894.0,719.8 903.0,709.4 911.9,713.8 920.9,718.6 929.8,719.8 938.8,714.6 947.7,723.3 956.7,714.2 965.6,713.4 974.6,714.6 983.5,711.0 992.5,705.8 1001.5,709.8 1010.4,712.6 1019.4,717.8 1028.3,716.2 1037.3,715.4 1046.2,710.6 1055.2,709.8 1064.1,713.4 1073.1,721.8 1082.0,710.2 1091.0,713.0 1099.9,714.6 1108.9,710.2 1117.8,711.0 1126.8,708.6 1135.7,711.8 1144.7,713.0 1153.6,701.1 1162.6,711.4 1171.5,706.2 1180.5,704.6 1189.5,698.7 1198.4,709.0 1207.4,709.0 1216.3,713.4 1225.3,706.6 1234.2,716.2 1243.2,706.6 1252.1,710.6 1261.1,709.4 1270.0,715.0 1279.0,713.4 1287.9,710.2 1296.9,711.4 1305.8,710.2 1314.8,713.8 1323.7,709.4 1332.7,709.8 1341.6,709.4 1350.6,705.0" fill="none" stroke="#808fab" stroke-width="1.500"/>
    <rect x="822.4" y="692" width="71.1" height="40" fill="#f4f4f4" fill-opacity=".68"/>
    <rect x="1252.5" y="692" width="98.1" height="40" fill="#f4f4f4" fill-opacity=".68"/>
    <path d="M822.500 732V692M1350.500 732V692M822 731.500H893.5M1252.5 731.500H1351" fill="none" stroke="#b4b4b4" shape-rendering="crispEdges"/>
    <path d="M822 693H893.5M1252.5 693H1351" fill="none" stroke="#4a4a4a" stroke-width="1.600"/>
    <path d="M893.5 692.500V731.500H1252.5V692.500" fill="none" stroke="#2a2a2a" stroke-width="1" shape-rendering="crispEdges"/>
    <g fill="#fff" stroke="#1a1a1a" stroke-width="1">
      <rect x="889.5" y="704.500" width="8" height="15" rx="2.500"/><rect x="1248.5" y="704.500" width="8" height="15" rx="2.500"/>
    </g>
    <path d="M892.5 707v10M894.5 707v10M1251.5 707v10M1253.5 707v10" stroke="#222" stroke-width="1" shape-rendering="crispEdges"/>
  </svg>
<!--VWE-->
  <svg style="left:0;top:0" width="1392" height="770" viewBox="0 0 1392 770" fill="#000">
    <path d="M597.5 238.9H609.6V204.5L597.2 207.1V197.8L609.6 195.2H622.6V238.9H634.7V248.4H597.5Z"/>
    <path d="M603.3 515.9H626.8V526H588.1V515.9L607.5 498.8Q610.1 496.4 611.4 494.2Q612.6 491.9 612.6 489.5Q612.6 485.8 610.1 483.5Q607.6 481.2 603.4 481.2Q600.2 481.2 596.4 482.6Q592.6 484 588.2 486.7V475Q592.9 473.4 597.4 472.6Q601.9 471.8 606.3 471.8Q615.8 471.8 621.1 476Q626.4 480.3 626.4 487.8Q626.4 492.1 624.2 495.9Q621.9 499.6 614.7 505.9Z"/>
    <path d="M1290.6 242.9Q1296 244.3 1298.8 247.7Q1301.6 251.2 1301.6 256.5Q1301.6 264.4 1295.5 268.5Q1289.5 272.6 1277.9 272.6Q1273.8 272.6 1269.6 272Q1265.5 271.3 1261.5 270V259.4Q1265.3 261.3 1269.1 262.3Q1272.9 263.3 1276.6 263.3Q1282.1 263.3 1285 261.4Q1287.9 259.5 1287.9 256Q1287.9 252.4 1284.9 250.5Q1281.9 248.6 1276.1 248.6H1270.6V239.8H1276.4Q1281.6 239.8 1284.1 238.2Q1286.6 236.5 1286.6 233.2Q1286.6 230.2 1284.2 228.5Q1281.7 226.8 1277.2 226.8Q1273.9 226.8 1270.5 227.6Q1267.1 228.3 1263.8 229.8V219.7Q1267.8 218.6 1271.8 218Q1275.8 217.4 1279.7 217.4Q1290 217.4 1295.2 220.8Q1300.3 224.2 1300.3 231.1Q1300.3 235.8 1297.9 238.7Q1295.4 241.7 1290.6 242.9Z"/>
    <path d="M1298.8 456.3 1283.8 478.6H1298.8ZM1296.5 445H1311.8V478.6H1319.3V488.5H1311.8V498.2H1298.8V488.5H1275.2V476.8Z"/>
  </svg>
</div></div>
</body>
</html>
